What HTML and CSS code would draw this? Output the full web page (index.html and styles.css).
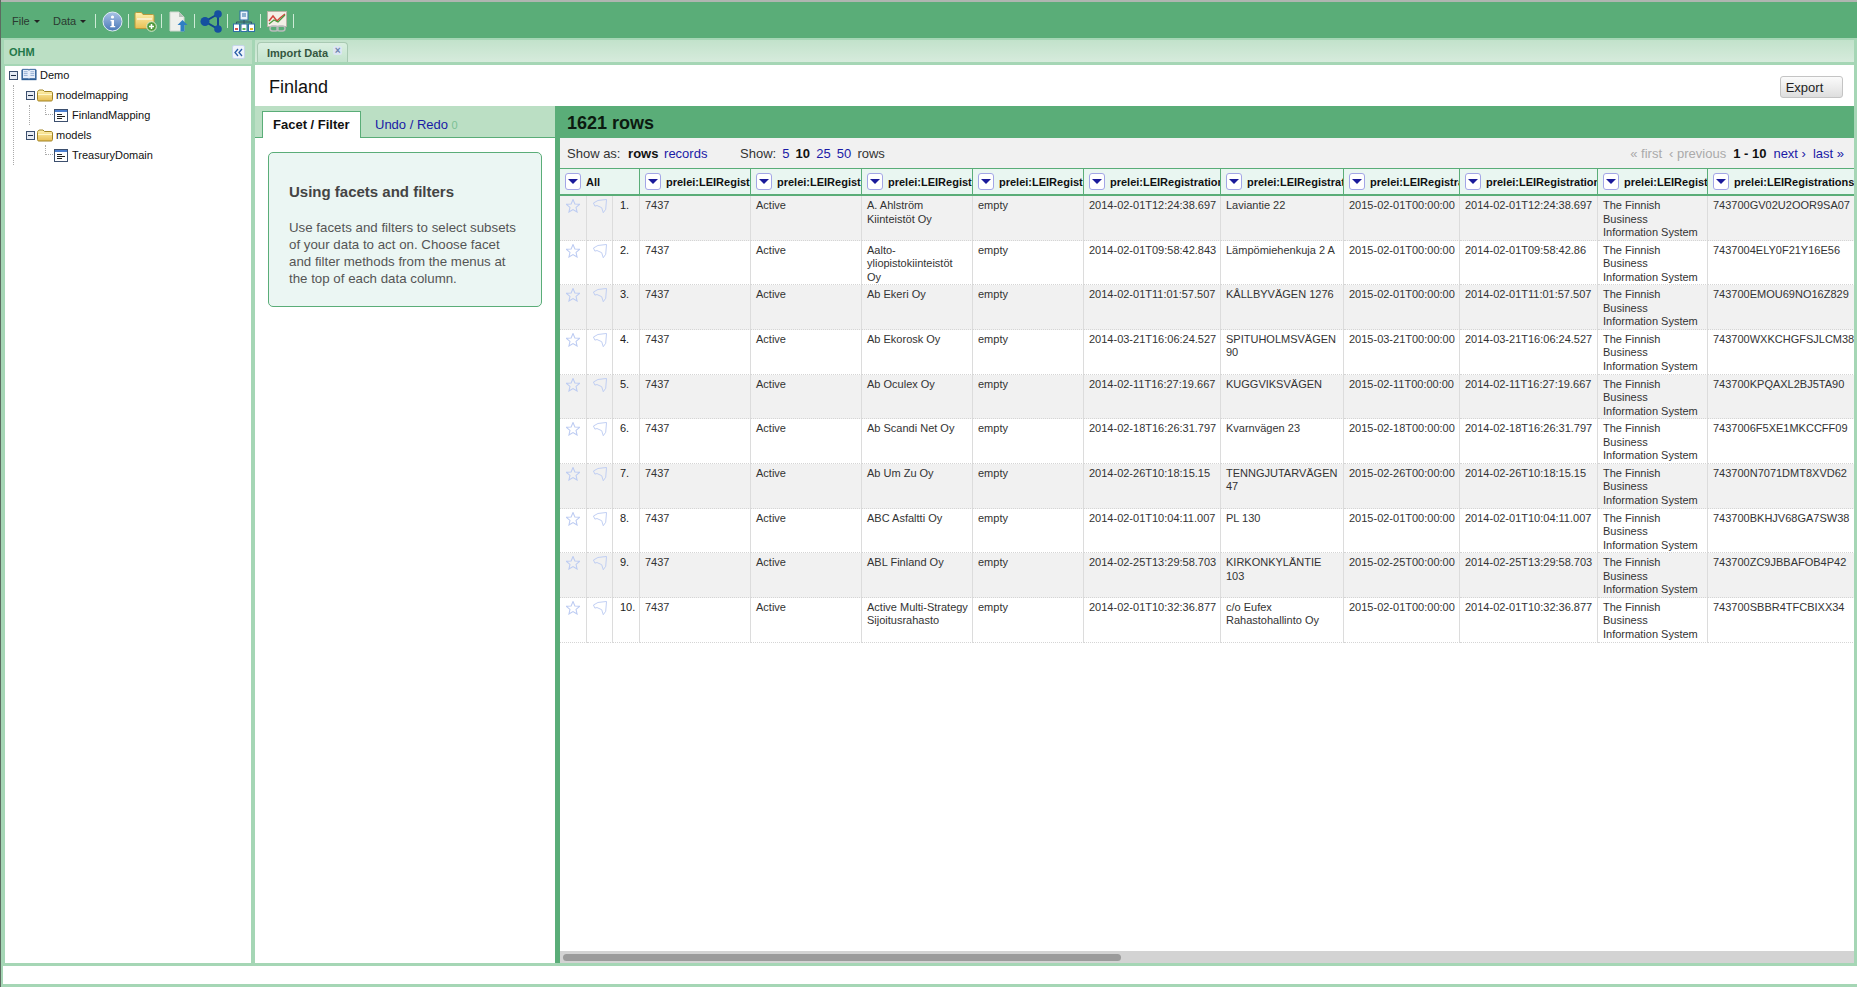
FILE: index.html
```html
<!DOCTYPE html>
<html>
<head>
  <meta charset="UTF-8">
  <title>OHM</title>
  <link rel="stylesheet" href="styles.css">
</head>
<body>
  <svg class="defs" width="0" height="0">
    <defs>
      <linearGradient id="infoFill" x1="0" y1="0" x2="0" y2="1"><stop offset="0" stop-color="#a9c3e6"/><stop offset="1" stop-color="#4a79b8"/></linearGradient>
      <linearGradient id="folderFill" x1="0" y1="0" x2="0" y2="1"><stop offset="0" stop-color="#fff2b0"/><stop offset="1" stop-color="#e8bf55"/></linearGradient>
      <symbol id="star" viewBox="0.300 0.300 13.400 13.400"><path d="M7 .8l1.800 4.200 4.500.4-3.400 3 1 4.400L7 10.500l-3.900 2.300 1-4.400-3.400-3 4.500-.4z" fill="none" stroke="#bccbf2" stroke-width="1"/></symbol>
      <symbol id="flag" viewBox="0 0 15 15"><path d="M.5 4.300L5.300 1.600 14.500.5l-.9 10.500-2.600 3.700-1.700-5.400L4.300 7 2 7.600z" fill="none" stroke="#bccbf2" stroke-width="1"/></symbol>
      <symbol id="minus" viewBox="0 0 9 9"><rect x=".5" y=".5" width="8" height="8" fill="#e6ebf3" stroke="#3c4f6e"/><rect x="2" y="4" width="5" height="1" fill="#1e2c44"/></symbol>
      <symbol id="folder" viewBox="0 0 16 13"><path d="M.5 3.500C.5 2 1.500 1 3 1h3l1.500 1.500H14c1 0 1.500.7 1.500 1.500v6.500c0 1-.7 1.500-1.500 1.500H2c-1 0-1.500-.5-1.500-1.500z" fill="url(#folderFill)" stroke="#a08324"/><path d="M1 5.500h14" stroke="#fff6c8"/></symbol>
      <symbol id="leaf" viewBox="0 0 14 13"><rect x=".5" y=".5" width="13" height="12" fill="#fff" stroke="#3c4f6e"/><rect x="1" y="1" width="12" height="2" fill="#4c7fd0"/><path d="M3 5.500h5M3 7.500h8M3 9.500h5" stroke="#222"/></symbol>
    </defs>
  </svg>

  <div class="toolbar">
    <span class="menu menu-file">File <i class="caret"></i></span>
    <span class="menu menu-data">Data <i class="caret"></i></span>
    <span class="sep"></span>
    <span class="tool">
      <svg width="21" height="21" viewBox="0 0 21 21"><circle cx="10.500" cy="10.500" r="9.500" fill="url(#infoFill)" stroke="#dfe9f6"/><circle cx="10.500" cy="6" r="1.600" fill="#fff"/><path d="M8.500 9h3.500v6h1.200v1.300H8.300V15h1.200v-4.700h-1z" fill="#fff"/></svg>
    </span>
    <span class="sep"></span>
    <span class="tool">
      <svg width="23" height="21" viewBox="0 0 23 21"><path d="M1 3c0-1 .5-1.500 1.500-1.500h5L9 3.500h9.500c1 0 1.500.5 1.500 1.500v11c0 1-.5 1.500-1.500 1.500h-16c-1 0-1.500-.5-1.500-1.500z" fill="url(#folderFill)" stroke="#b99a3a"/><path d="M3 8h15" stroke="#fff" stroke-width="1.500" opacity=".7"/><circle cx="17.500" cy="15.500" r="4.800" fill="#4f9a3c" stroke="#dcebd3"/><path d="M15 15.500h5M17.500 13v5" stroke="#fff" stroke-width="1.500"/></svg>
    </span>
    <span class="sep"></span>
    <span class="tool">
      <svg width="19" height="21" viewBox="0 0 19 21"><path d="M1 1h9l5 5v14H1z" fill="#eef0ec" stroke="#cfd6cf"/><path d="M10 1v5h5z" fill="#b7c2bb"/><path d="M8.500 14l5-5 5 5h-3v6.500h-4V14z" fill="#2f7fc4"/></svg>
    </span>
    <span class="sep"></span>
    <span class="tool">
      <svg width="23" height="23" viewBox="0 0 23 23"><path d="M18 4L5 11.500 18 19z" fill="none" stroke="#11458f" stroke-width="2"/><circle cx="18" cy="4" r="3.800" fill="#15509f"/><circle cx="5" cy="11.500" r="4.500" fill="#15509f"/><circle cx="18" cy="19" r="3.800" fill="#15509f"/></svg>
    </span>
    <span class="sep"></span>
    <span class="tool">
      <svg width="22" height="22" viewBox="0 0 22 22"><rect x="7" y="1" width="8" height="9" fill="#eaf2fb" stroke="#2f6ea8"/><path d="M9 4h4M9 6h4" stroke="#2f6ea8"/><path d="M3.500 14v-2h15v2M11 10v4" fill="none" stroke="#31516f"/><rect x=".5" y="14" width="6" height="7.500" fill="#fff" stroke="#2f6ea8"/><rect x="8" y="14" width="6" height="7.500" fill="#fff" stroke="#2f6ea8"/><rect x="15.500" y="14" width="6" height="7.500" fill="#fff" stroke="#2f6ea8"/><rect x="2" y="18" width="3" height="2" fill="#d9534f"/><rect x="9.500" y="18" width="3" height="2" fill="#5cb85c"/><rect x="17" y="18" width="3" height="2" fill="#e6b422"/></svg>
    </span>
    <span class="sep"></span>
    <span class="tool">
      <svg width="21" height="21" viewBox="0 0 21 21"><rect x=".5" y=".5" width="19" height="15" fill="#f3efe6" stroke="#b8b3a6"/><path d="M2 10l4-5 4 5 3-3 5-4" fill="none" stroke="#d2453c" stroke-width="1.500"/><path d="M2 13l5-4 4 2 7-7" fill="none" stroke="#4b9c3f" stroke-width="1.200"/><rect x="3" y="15" width="8" height="5" rx="2.500" fill="none" stroke="#b9bcbc" stroke-width="1.500"/><rect x="10" y="15" width="8" height="5" rx="2.500" fill="none" stroke="#b9bcbc" stroke-width="1.500"/></svg>
    </span>
    <span class="sep"></span>
  </div>

  <div class="main">
    <div class="left-panel">
      <div class="panel-head">
        <span class="panel-title">OHM</span>
        <span class="collapse">
          <svg width="9" height="9" viewBox="0 0 9 9"><path d="M4 1L1 4.500 4 8M8 1L5 4.500 8 8" fill="none" stroke="#2a5da8" stroke-width="1.300"/></svg>
        </span>
      </div>
      <ul class="tree">
        <li>
          <div class="node"><svg class="exp" width="9" height="9"><use href="#minus"/></svg><svg class="book" width="16" height="14" viewBox="0 0 17 14"><path d="M.5 1.500h16v11h-16z" fill="#2c5c94"/><path d="M1.500 1h6.500l.5 1 .5-1h6.500v10h-6.500l-.5 1-.5-1H1.500z" fill="#e6eefa" stroke="#2c5c94"/><path d="M3 3.500h4M3 5.500h4M3 7.500h4M10 3.500h4M10 5.500h4M10 7.500h4" stroke="#93aed3"/></svg><span>Demo</span></div>
          <ul class="tree-sub">
            <li>
              <div class="node"><svg class="exp" width="9" height="9"><use href="#minus"/></svg><svg class="ico" width="16" height="13"><use href="#folder"/></svg><span>modelmapping</span></div>
              <ul class="tree-leaves">
                <li><div class="node leaf-node"><i class="dash"></i><svg class="ico" width="14" height="13"><use href="#leaf"/></svg><span>FinlandMapping</span></div></li>
              </ul>
            </li>
            <li>
              <div class="node"><svg class="exp" width="9" height="9"><use href="#minus"/></svg><svg class="ico" width="16" height="13"><use href="#folder"/></svg><span>models</span></div>
              <ul class="tree-leaves last">
                <li><div class="node leaf-node"><i class="dash"></i><svg class="ico" width="14" height="13"><use href="#leaf"/></svg><span>TreasuryDomain</span></div></li>
              </ul>
            </li>
          </ul>
        </li>
      </ul>
    </div>

    <div class="work">
      <div class="tabbar">
        <div class="tab">Import Data<span class="tab-x">×</span></div>
      </div>
      <div class="content">
        <div class="title-row">
          <span class="project-name">Finland</span>
          <button class="export">Export</button>
        </div>
        <div class="split">
          <div class="facets">
            <div class="facet-tabs">
              <span class="facet-tab active">Facet / Filter</span>
              <span class="facet-tab">Undo / Redo <em>0</em></span>
            </div>
            <div class="facet-body">
              <div class="help">
                <h2>Using facets and filters</h2>
                <p>Use facets and filters to select subsets of your data to act on. Choose facet and filter methods from the menus at the top of each data column.</p>
              </div>
            </div>
          </div>

          <div class="view">
            <div class="summary">1621 rows</div>
            <div class="controls">
              <span class="show-as">Show as: <b>rows</b> <a>records</a></span>
              <span class="show-count">Show: <a>5</a> <b>10</b> <a>25</a> <a>50</a> rows</span>
              <span class="pager"><span class="off">« first</span> <span class="off">‹ previous</span> <b>1 - 10</b> <a>next ›</a> <a>last »</a></span>
            </div>
            <div class="table-wrap">
              <table class="grid">
                <colgroup>
                  <col class="c-star"><col class="c-flag"><col class="c-num">
                  <col class="c-111"><col class="c-111"><col class="c-111"><col class="c-111">
                  <col class="c-137"><col class="c-123"><col class="c-116"><col class="c-138">
                  <col class="c-110"><col class="c-last">
                </colgroup>
                <thead>
                  <tr>
                    <th colspan="3"><div class="hd"><i class="drop"></i>All</div></th>
                    <th><div class="hd"><i class="drop"></i>prelei:LEIRegistration</div></th>
                    <th><div class="hd"><i class="drop"></i>prelei:LEIRegistration</div></th>
                    <th><div class="hd"><i class="drop"></i>prelei:LEIRegistration</div></th>
                    <th><div class="hd"><i class="drop"></i>prelei:LEIRegistration</div></th>
                    <th><div class="hd"><i class="drop"></i>prelei:LEIRegistration</div></th>
                    <th><div class="hd"><i class="drop"></i>prelei:LEIRegistration</div></th>
                    <th><div class="hd"><i class="drop"></i>prelei:LEIRegistration</div></th>
                    <th><div class="hd"><i class="drop"></i>prelei:LEIRegistration</div></th>
                    <th><div class="hd"><i class="drop"></i>prelei:LEIRegistration</div></th>
                    <th><div class="hd"><i class="drop"></i>prelei:LEIRegistrations</div></th>
                  </tr>
                </thead>
                <tbody>
                  <tr>
                    <td class="ic"><svg width="14" height="14"><use href="#star"/></svg></td><td class="ic"><svg width="14" height="14"><use href="#flag"/></svg></td><td class="num">1.</td>
                    <td>7437</td><td>Active</td><td>A. Ahlström Kiinteistöt Oy</td><td>empty</td><td>2014-02-01T12:24:38.697</td><td>Laviantie 22</td><td>2015-02-01T00:00:00</td><td>2014-02-01T12:24:38.697</td><td>The Finnish Business Information System</td><td>743700GV02U2OOR9SA07</td>
                  </tr>
                  <tr>
                    <td class="ic"><svg width="14" height="14"><use href="#star"/></svg></td><td class="ic"><svg width="14" height="14"><use href="#flag"/></svg></td><td class="num">2.</td>
                    <td>7437</td><td>Active</td><td>Aalto-yliopistokiinteistöt Oy</td><td>empty</td><td>2014-02-01T09:58:42.843</td><td>Lämpömiehenkuja 2 A</td><td>2015-02-01T00:00:00</td><td>2014-02-01T09:58:42.86</td><td>The Finnish Business Information System</td><td>7437004ELY0F21Y16E56</td>
                  </tr>
                  <tr>
                    <td class="ic"><svg width="14" height="14"><use href="#star"/></svg></td><td class="ic"><svg width="14" height="14"><use href="#flag"/></svg></td><td class="num">3.</td>
                    <td>7437</td><td>Active</td><td>Ab Ekeri Oy</td><td>empty</td><td>2014-02-01T11:01:57.507</td><td>KÅLLBYVÄGEN 1276</td><td>2015-02-01T00:00:00</td><td>2014-02-01T11:01:57.507</td><td>The Finnish Business Information System</td><td>743700EMOU69NO16Z829</td>
                  </tr>
                  <tr>
                    <td class="ic"><svg width="14" height="14"><use href="#star"/></svg></td><td class="ic"><svg width="14" height="14"><use href="#flag"/></svg></td><td class="num">4.</td>
                    <td>7437</td><td>Active</td><td>Ab Ekorosk Oy</td><td>empty</td><td>2014-03-21T16:06:24.527</td><td>SPITUHOLMSVÄGEN 90</td><td>2015-03-21T00:00:00</td><td>2014-03-21T16:06:24.527</td><td>The Finnish Business Information System</td><td>743700WXKCHGFSJLCM38</td>
                  </tr>
                  <tr>
                    <td class="ic"><svg width="14" height="14"><use href="#star"/></svg></td><td class="ic"><svg width="14" height="14"><use href="#flag"/></svg></td><td class="num">5.</td>
                    <td>7437</td><td>Active</td><td>Ab Oculex Oy</td><td>empty</td><td>2014-02-11T16:27:19.667</td><td>KUGGVIKSVÄGEN</td><td>2015-02-11T00:00:00</td><td>2014-02-11T16:27:19.667</td><td>The Finnish Business Information System</td><td>743700KPQAXL2BJ5TA90</td>
                  </tr>
                  <tr>
                    <td class="ic"><svg width="14" height="14"><use href="#star"/></svg></td><td class="ic"><svg width="14" height="14"><use href="#flag"/></svg></td><td class="num">6.</td>
                    <td>7437</td><td>Active</td><td>Ab Scandi Net Oy</td><td>empty</td><td>2014-02-18T16:26:31.797</td><td>Kvarnvägen 23</td><td>2015-02-18T00:00:00</td><td>2014-02-18T16:26:31.797</td><td>The Finnish Business Information System</td><td>7437006F5XE1MKCCFF09</td>
                  </tr>
                  <tr>
                    <td class="ic"><svg width="14" height="14"><use href="#star"/></svg></td><td class="ic"><svg width="14" height="14"><use href="#flag"/></svg></td><td class="num">7.</td>
                    <td>7437</td><td>Active</td><td>Ab Um Zu Oy</td><td>empty</td><td>2014-02-26T10:18:15.15</td><td>TENNGJUTARVÄGEN 47</td><td>2015-02-26T00:00:00</td><td>2014-02-26T10:18:15.15</td><td>The Finnish Business Information System</td><td>743700N7071DMT8XVD62</td>
                  </tr>
                  <tr>
                    <td class="ic"><svg width="14" height="14"><use href="#star"/></svg></td><td class="ic"><svg width="14" height="14"><use href="#flag"/></svg></td><td class="num">8.</td>
                    <td>7437</td><td>Active</td><td>ABC Asfaltti Oy</td><td>empty</td><td>2014-02-01T10:04:11.007</td><td>PL 130</td><td>2015-02-01T00:00:00</td><td>2014-02-01T10:04:11.007</td><td>The Finnish Business Information System</td><td>743700BKHJV68GA7SW38</td>
                  </tr>
                  <tr>
                    <td class="ic"><svg width="14" height="14"><use href="#star"/></svg></td><td class="ic"><svg width="14" height="14"><use href="#flag"/></svg></td><td class="num">9.</td>
                    <td>7437</td><td>Active</td><td>ABL Finland Oy</td><td>empty</td><td>2014-02-25T13:29:58.703</td><td>KIRKONKYLÄNTIE 103</td><td>2015-02-25T00:00:00</td><td>2014-02-25T13:29:58.703</td><td>The Finnish Business Information System</td><td>743700ZC9JBBAFOB4P42</td>
                  </tr>
                  <tr>
                    <td class="ic"><svg width="14" height="14"><use href="#star"/></svg></td><td class="ic"><svg width="14" height="14"><use href="#flag"/></svg></td><td class="num">10.</td>
                    <td>7437</td><td>Active</td><td>Active Multi-Strategy Sijoitusrahasto</td><td>empty</td><td>2014-02-01T10:32:36.877</td><td>c/o Eufex Rahastohallinto Oy</td><td>2015-02-01T00:00:00</td><td>2014-02-01T10:32:36.877</td><td>The Finnish Business Information System</td><td>743700SBBR4TFCBIXX34</td>
                  </tr>
                </tbody>
              </table>
            </div>
            <div class="hscroll"><div class="hthumb"></div></div>
          </div>
        </div>
      </div>
    </div>
  </div>
  <div class="statusbar"></div>
</body>
</html>
```

FILE: styles.css
```css
html, body {
  margin: 0;
  height: 100%;
  overflow: hidden;
}

body {
  display: flex;
  flex-direction: column;
  height: 987px;
  background-color: #a5d6b5;
  font-family: "Liberation Sans", Arial, sans-serif;
  font-size: 11px;
  color: #222;
  padding-left: 1px;
  box-sizing: border-box;
  border-left: 1px solid #5c6b60;
}

.defs {
  position: absolute;
}

a {
  color: #1a1aa6;
}

/* top toolbar */
.toolbar {
  height: 36px;
  margin-top: 2px;
  margin-left: -1px;
  padding: 2px 0 0 11px;
  box-sizing: border-box;
  background-color: #5aad78;
  box-shadow: 0 -2px 0 #b0b5b1;
  display: flex;
  align-items: center;
  flex: none;
  color: #2a3a30;
}

.menu {
  font-size: 11px;
  display: inline-flex;
  align-items: center;
}

.menu-file {
  width: 41px;
}

.menu-data {
  width: 42px;
}

.caret {
  display: inline-block;
  margin-left: 4px;
  border-top: 3px solid #222;
  border-left: 3px solid transparent;
  border-right: 3px solid transparent;
}

.sep {
  width: 1px;
  height: 14px;
  background-color: #cdebd6;
  flex: none;
}

.tool {
  width: 32px;
  display: flex;
  justify-content: center;
  align-items: center;
  flex: none;
}

/* main area */
.main {
  flex: none;
  height: 923px;
  margin: 2px 3px 0 2px;
  display: flex;
  gap: 3px;
}

.left-panel {
  width: 248px;
  flex: none;
  display: flex;
  flex-direction: column;
}

.panel-head {
  height: 24px;
  background-color: #bbdfc4;
  display: flex;
  align-items: center;
  justify-content: space-between;
  padding: 0 7px 0 5px;
  flex: none;
}

.panel-title {
  font-weight: bold;
  font-size: 11px;
  color: #23784a;
}

.collapse {
  width: 13px;
  height: 14px;
  background-color: #eef4fb;
  border: 1px solid #c6d6ea;
  border-radius: 2px;
  display: flex;
  align-items: center;
  justify-content: center;
  box-sizing: border-box;
}

/* tree */
.tree {
  flex: 1;
  margin: 2px 1px 0;
  padding: 0 0 0 4px;
  background-color: #fff;
  list-style: none;
}

.tree > li {
  margin-top: -1px;
}

.tree-sub {
  list-style: none;
  margin: 0 0 0 4px;
  padding: 0 0 0 12px;
  border-left: 1px dotted #aaa;
}

.tree-leaves {
  list-style: none;
  margin: 0 0 0 3px;
  padding: 0 0 0 12px;
  border-left: 1px dotted #aaa;
}

.tree-leaves.last {
  border-left-color: transparent;
}

.node {
  height: 20px;
  display: flex;
  align-items: center;
  color: #111;
  white-space: nowrap;
}

.node .exp {
  flex: none;
  margin-right: 2px;
}

.node .book {
  flex: none;
  margin: 0 3px 0 1px;
}

.node .ico {
  flex: none;
  margin-right: 3px;
}

.leaf-node .dash {
  flex: none;
  width: 8px;
  height: 10px;
  box-sizing: border-box;
  align-self: flex-start;
  margin-left: 3px;
  border-left: 1px dotted #aaa;
  border-bottom: 1px dotted #aaa;
}

.leaf-node .ico {
  margin: 0 4px 0 1px;
}

/* work area */
.work {
  flex: 1;
  min-width: 0;
  display: flex;
  flex-direction: column;
}

.tabbar {
  height: 22px;
  flex: none;
  display: flex;
  align-items: flex-end;
  padding-left: 2px;
  background: linear-gradient(#c2e2cb, #d6ebdc);
}

.tab {
  height: 19px;
  padding: 0 5px 0 9px;
  display: flex;
  align-items: center;
  gap: 5px;
  font-weight: bold;
  color: #34573f;
  background: linear-gradient(#d9efe0, #c3e3cd);
  border: 1px solid #a8c9b2;
  border-bottom: 0;
  border-radius: 4px 4px 0 0;
}

.tab-x {
  width: 9px;
  height: 9px;
  border-radius: 2px;
  background-color: #dce6f2;
  color: #6d83ad;
  font-size: 10px;
  line-height: 9px;
  text-align: center;
  margin-top: -4px;
}

.content {
  flex: 1;
  min-height: 0;
  margin-top: 3px;
  background-color: #fff;
  display: flex;
  flex-direction: column;
}

.title-row {
  height: 41px;
  flex: none;
  box-sizing: border-box;
  display: flex;
  align-items: center;
  justify-content: space-between;
  padding: 3px 11px 0 14px;
}

.project-name {
  font-size: 18px;
  color: #111;
}

.export {
  width: 63px;
  height: 22px;
  padding: 0 14px 0 0;
  font-family: inherit;
  font-size: 13px;
  color: #222;
  border: 1px solid #c4c4c4;
  border-radius: 3px;
  background: linear-gradient(#fbfbfb, #dedede);
}

.split {
  flex: 1;
  min-height: 0;
  display: flex;
}

/* facet panel */
.facets {
  width: 300px;
  flex: none;
  display: flex;
  flex-direction: column;
}

.facet-tabs {
  height: 32px;
  flex: none;
  background-color: #bbdfc4;
  border-bottom: 1px solid #5aad78;
  box-sizing: border-box;
  display: flex;
  align-items: flex-end;
  padding-left: 7px;
  font-size: 13px;
}

.facet-tab {
  height: 27px;
  line-height: 29px;
  padding: 0 14px 0 14px;
  color: #1a1aa6;
}

.facet-tab em {
  font-style: normal;
  color: #7cbf95;
  font-size: 11px;
}

.facet-tab.active {
  margin-bottom: -1px;
  padding: 0 10px;
  line-height: 25px;
  box-sizing: border-box;
  width: 99px;
  color: #111;
  font-weight: bold;
  background-color: #fff;
  border: 1px solid #5aad78;
  border-bottom: 0;
  white-space: nowrap;
}

.facet-body {
  flex: 1;
  padding: 14px 13px 0;
}

.help {
  height: 155px;
  box-sizing: border-box;
  padding: 30px 20px 0;
  border: 1px solid #5aad78;
  border-radius: 5px;
  background-color: #ebf6f3;
  color: #555;
}

.help h2 {
  margin: 0 0 18px;
  font-size: 15px;
  line-height: 18px;
  color: #444;
}

.help p {
  margin: 0;
  font-size: 13.300px;
  line-height: 17px;
}

/* data view */
.view {
  flex: 1;
  min-width: 0;
  display: flex;
  flex-direction: column;
  border-left: 5px solid #5aad78;
}

.summary {
  height: 32px;
  flex: none;
  margin-left: -5px;
  padding-left: 12px;
  background-color: #5aad78;
  font-size: 18px;
  font-weight: bold;
  line-height: 35px;
  overflow: hidden;
  color: #0c1a10;
}

.controls {
  height: 30px;
  flex: none;
  display: flex;
  align-items: center;
  padding: 0 10px 0 7px;
  background-color: #f1f1f1;
  font-size: 13px;
  color: #333;
  box-sizing: border-box;
}

.controls b {
  color: #111;
}

.show-as {
  width: 173px;
}

.show-as b {
  margin: 0 2px 0 4px;
}

.show-count {
  word-spacing: 2.500px;
}

.pager {
  margin-left: auto;
  display: flex;
  gap: 7px;
}

.pager .off {
  color: #aaa;
}

.table-wrap {
  flex: 1;
  min-height: 0;
  overflow: hidden;
}

.grid {
  table-layout: fixed;
  border-collapse: separate;
  border-spacing: 0;
  width: 1373px;
  color: #333;
}

.c-star { width: 27px; }
.c-flag { width: 26px; }
.c-num { width: 27px; }
.c-111 { width: 111px; }
.c-110 { width: 110px; }
.c-137 { width: 137px; }
.c-138 { width: 138px; }
.c-123 { width: 123px; }
.c-116 { width: 116px; }
.c-last { width: 225px; }

.grid th {
  height: 25px;
  padding: 0;
  background-color: #e9f6f1;
  border-top: 1px solid #5aad78;
  border-bottom: 2px solid #5aad78;
  border-right: 1px solid #5aad78;
  text-align: left;
  font-size: 11px;
  color: #111;
}

.hd {
  display: flex;
  align-items: center;
  gap: 5px;
  padding-left: 5px;
  overflow: hidden;
  white-space: nowrap;
}

.drop {
  flex: none;
  width: 16px;
  height: 17px;
  box-sizing: border-box;
  border: 1px solid #a3a6e6;
  border-radius: 3px;
  background-color: #fff;
  display: flex;
  align-items: center;
  justify-content: center;
}

.drop::after {
  content: "";
  border-top: 5px solid #1a1a9a;
  border-left: 5px solid transparent;
  border-right: 5px solid transparent;
}

.grid td {
  padding: 3px 4px 0.170px 5px;
  font-size: 11px;
  line-height: 13.500px;
  vertical-align: top;
  border-right: 1px solid #dcdcdc;
  border-bottom: 1px dotted #d5d5d5;
  overflow: hidden;
}

/* dates and ids stay on one line */
.grid td:nth-child(8),
.grid td:nth-child(10),
.grid td:nth-child(11),
.grid td:last-child {
  white-space: nowrap;
}

.grid tbody tr:nth-child(odd) td {
  background-color: #f1f1f1;
}

.grid td.ic {
  padding: 3px 0 0;
  text-align: center;
}

.grid td.ic svg {
  display: block;
  margin: 0 auto;
}

.grid td.num {
  padding-left: 7px;
  padding-right: 0;
  color: #222;
}

.hscroll {
  height: 12px;
  flex: none;
  background-color: #d3d3d3;
  padding: 3px 3px 2px;
  box-sizing: border-box;
}

.hthumb {
  width: 558px;
  height: 7px;
  border-radius: 4px;
  background-color: #9b9b9b;
}

.statusbar {
  flex: none;
  height: 18px;
  margin-top: 3px;
  background-color: #fff;
  margin-left: 1px;
}
```
